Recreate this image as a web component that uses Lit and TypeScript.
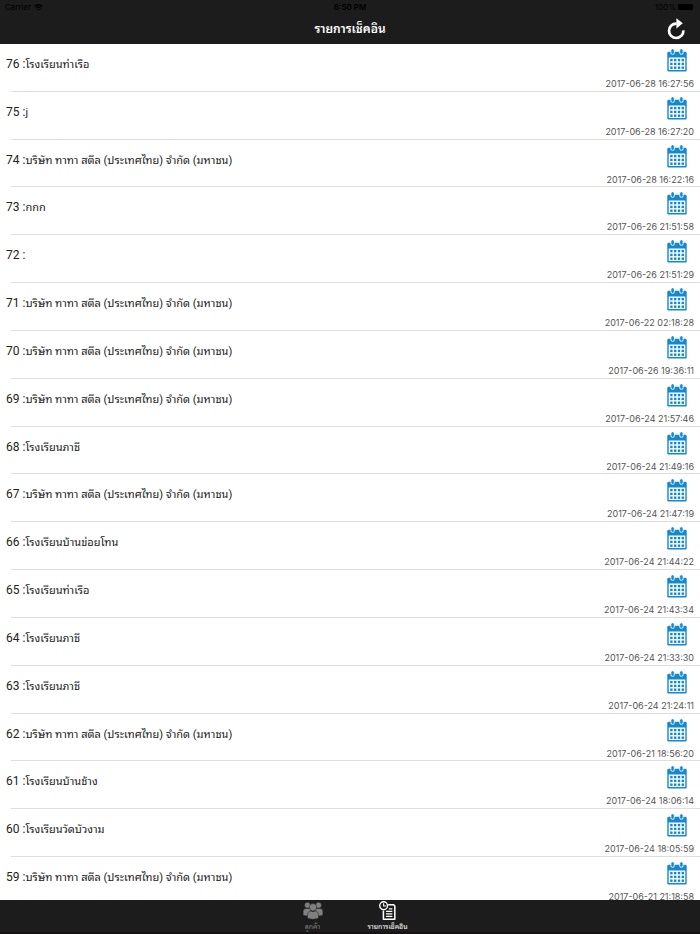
import { LitElement, css, html, svg } from "lit";
import { customElement, property } from "lit/decorators.js";

interface CheckIn {
  id: number;
  name: string;
  time: string;
}

const TATA = "บริษัท ทาทา สตีล (ประเทศไทย) จำกัด (มหาชน)";

const CHECK_INS: CheckIn[] = [
  { id: 76, name: "โรงเรียนท่าเรือ", time: "2017-06-28 16:27:56" },
  { id: 75, name: "j", time: "2017-06-28 16:27:20" },
  { id: 74, name: TATA, time: "2017-06-28 16:22:16" },
  { id: 73, name: "กกก", time: "2017-06-26 21:51:58" },
  { id: 72, name: "", time: "2017-06-26 21:51:29" },
  { id: 71, name: TATA, time: "2017-06-22 02:18:28" },
  { id: 70, name: TATA, time: "2017-06-26 19:36:11" },
  { id: 69, name: TATA, time: "2017-06-24 21:57:46" },
  { id: 68, name: "โรงเรียนภาชี", time: "2017-06-24 21:49:16" },
  { id: 67, name: TATA, time: "2017-06-24 21:47:19" },
  { id: 66, name: "โรงเรียนบ้านข่อยโทน", time: "2017-06-24 21:44:22" },
  { id: 65, name: "โรงเรียนท่าเรือ", time: "2017-06-24 21:43:34" },
  { id: 64, name: "โรงเรียนภาชี", time: "2017-06-24 21:33:30" },
  { id: 63, name: "โรงเรียนภาชี", time: "2017-06-24 21:24:11" },
  { id: 62, name: TATA, time: "2017-06-21 18:56:20" },
  { id: 61, name: "โรงเรียนบ้านช้าง", time: "2017-06-24 18:06:14" },
  { id: 60, name: "โรงเรียนวัดบัวงาม", time: "2017-06-24 18:05:59" },
  { id: 59, name: TATA, time: "2017-06-21 21:18:58" },
];

@customElement("calendar-icon")
export class CalendarIcon extends LitElement {
  static styles = css`
    :host {
      display: block;
      width: 20px;
      height: 23px;
    }
    svg {
      display: block;
    }
  `;

  render() {
    const cells = [0, 1, 2].flatMap((r) =>
      [0, 1, 2, 3].map(
        (c) => svg`<rect x=${3.2 + c * 3.8} y=${9.9 + r * 3.8} width="2.4" height="2.4" fill="#1488d0"/>`
      )
    );
    return html`<svg width="20" height="23" viewBox="0 0 20 23" aria-hidden="true">
      <rect x=".3" y="2.8" width="19.4" height="19.8" rx="1.4" fill="#1488d0" />
      <rect x="1.7" y="8.4" width="16.6" height="12.7" rx=".4" fill="#fff" />
      ${cells}
      <g fill="#1488d0" stroke="#fff" stroke-width=".9">
        <rect x="3.9" y="-.3" width="3.4" height="5.7" rx="1.7" />
        <rect x="12.7" y="-.3" width="3.4" height="5.7" rx="1.7" />
      </g>
    </svg>`;
  }
}

@customElement("check-in-row")
export class CheckInRow extends LitElement {
  static styles = css`
    :host {
      display: flex;
      justify-content: space-between;
      height: 100%;
      box-sizing: border-box;
      padding: 0 6px;
    }
    .label {
      padding-top: 11px;
      font-family: Roboto, Thonburi, "Noto Sans Thai Looped", "Noto Looped Thai", Loma, Garuda, Waree,
        Umpush, sans-serif;
      font-size: 12px;
      line-height: 18px;
      color: #222;
      white-space: nowrap;
    }
    .name {
      font-size: 11px;
    }
    .side {
      display: flex;
      flex-direction: column;
      align-items: flex-end;
      padding-top: 5px;
    }
    calendar-icon {
      margin-right: 7px;
    }
    time {
      padding-top: 6px;
      font-size: 9px;
      line-height: 12px;
      color: #555;
      white-space: nowrap;
    }
  `;

  @property({ attribute: false }) item!: CheckIn;

  render() {
    return html`
      <span class="label">${this.item.id} :<span class="name">${this.item.name}</span></span>
      <span class="side">
        <calendar-icon></calendar-icon>
        <time>${this.item.time}</time>
      </span>
    `;
  }
}

@customElement("app-root")
export class AppRoot extends LitElement {
  static styles = css`
    :host {
      display: flex;
      flex-direction: column;
      height: 100vh;
      background: #fff;
      font-family: Inter, Thonburi, "Noto Sans Thai Looped", "Noto Looped Thai", Loma, Garuda, Waree,
        Umpush, "Liberation Sans", sans-serif;
    }
    header {
      flex: none;
      background: #1c1c1c;
    }
    .bar {
      display: grid;
      grid-template-columns: 1fr auto 1fr;
      align-items: center;
      padding: 0 5px;
    }
    .status {
      height: 14px;
      font-size: 8px;
      color: #000;
    }
    .status .time {
      font-weight: 600;
    }
    .carrier,
    .power {
      display: flex;
      align-items: center;
      gap: 3px;
    }
    .power {
      justify-content: flex-end;
      gap: 2px;
    }
    .nav {
      height: 30px;
      padding: 0 14px;
    }
    h1 {
      grid-column: 2;
      margin: 0;
      font-size: 12px;
      line-height: 20px;
      font-weight: 600;
      color: #fff;
    }
    button {
      justify-self: end;
      padding: 0;
      border: 0;
      background: none;
      cursor: pointer;
    }
    svg {
      display: block;
    }
    main {
      flex: 1;
      min-height: 0;
      overflow-y: auto;
      scrollbar-width: none;
    }
    ul {
      display: grid;
      grid-auto-rows: minmax(47px, 1fr);
      min-height: calc(100% + 5px);
      margin: 0;
      padding: 0;
      list-style: none;
    }
    li {
      background: linear-gradient(#dedede, #dedede) 11px 100% / 100% 1px no-repeat;
    }
    footer {
      flex: none;
      height: 34px;
      box-sizing: border-box;
      display: flex;
      justify-content: center;
      background: #1c1c1c;
      border-bottom: 2px solid #161214;
    }
    .tab {
      display: flex;
      flex-direction: column;
      align-items: center;
      gap: 1px;
      width: 75px;
      padding-top: 1px;
      color: #808080;
      font-size: 7px;
      line-height: 11px;
      text-decoration: none;
      white-space: nowrap;
    }
    .tab.active {
      color: #fff;
    }
  `;

  render() {
    return html`
      <header>
        <div class="bar status">
          <span class="carrier">
            Carrier
            <svg width="9" height="7" viewBox="0 0 9 7" fill="none" stroke="#000" stroke-width="1.2" aria-hidden="true">
              <path d="M.6 2.5Q4.5-1 8.4 2.5M2.1 4.2Q4.5 2.2 6.9 4.2" />
              <path d="M3.2 5.3Q4.5 4.4 5.8 5.3L4.5 6.8Z" fill="#000" stroke="none" />
            </svg>
          </span>
          <span class="time">6:50 PM</span>
          <span class="power">
            100%
            <svg width="17" height="6" viewBox="0 0 17 6" aria-hidden="true">
              <rect width="15" height="6" rx="1" />
              <path d="M15.6 1.8Q17 3 15.6 4.2Z" />
            </svg>
          </span>
        </div>
        <div class="bar nav">
          <h1>รายการเช็คอิน</h1>
          <button type="button" aria-label="รีเฟรช">
            <svg width="19" height="22" viewBox="0 0 19 22" aria-hidden="true">
              <path d="M16.4 12.4A7.2 7.2 0 1 1 9.6 5.6" fill="none" stroke="#fff" stroke-width="2.7" />
              <path d="M9.4 .2V10.4L15.8 5.3Z" fill="#fff" />
            </svg>
          </button>
        </div>
      </header>
      <main>
        <ul>
          ${CHECK_INS.map((item) => html`<li><check-in-row .item=${item}></check-in-row></li>`)}
        </ul>
      </main>
      <footer>
        <a class="tab" href="#customers">
          <svg width="22" height="20" viewBox="0 0 22 20" fill="#808080" stroke="#1c1c1c" stroke-width=".5" aria-hidden="true">
            <circle cx="5.2" cy="4.4" r="3.1" />
            <circle cx="16.8" cy="4.4" r="3.1" />
            <path d="M.6 15V11Q.6 7.8 3.6 7.8H7Q9 8.2 9 11V15.6Q4 16.2 .6 15Z" />
            <path d="M13 15.6V11Q13 8.2 15 7.8H18.4Q21.4 7.8 21.4 11V15Q18 16.2 13 15.6Z" />
            <circle cx="11" cy="6.6" r="3.9" />
            <path d="M5.2 18.2V14.4Q5.2 11 8.6 10.6L11 11.4 13.4 10.6Q16.8 11 16.8 14.4V18.2Q11 20.2 5.2 18.2Z" />
          </svg>
          ลูกค้า
        </a>
        <a class="tab active" href="#check-ins" aria-current="page">
          <svg width="19" height="20" viewBox="0 0 19 20" fill="none" stroke="#fff" aria-hidden="true">
            <path d="M10.2 4H16L17.2 5.2V19.2H5.2V10" stroke-width="1.6" stroke-linejoin="round" />
            <circle cx="5.4" cy="4.9" r="4.1" stroke-width="1.4" />
            <path d="M5.4 2.4V5.2H8" stroke-width="1.1" />
            <path d="M11 8.4H14.6M8 11H14.6M8 13.6H14.6M8 16.2H14.6" stroke-width="1.3" />
          </svg>
          รายการเช็คอิน
        </a>
      </footer>
    `;
  }
}
